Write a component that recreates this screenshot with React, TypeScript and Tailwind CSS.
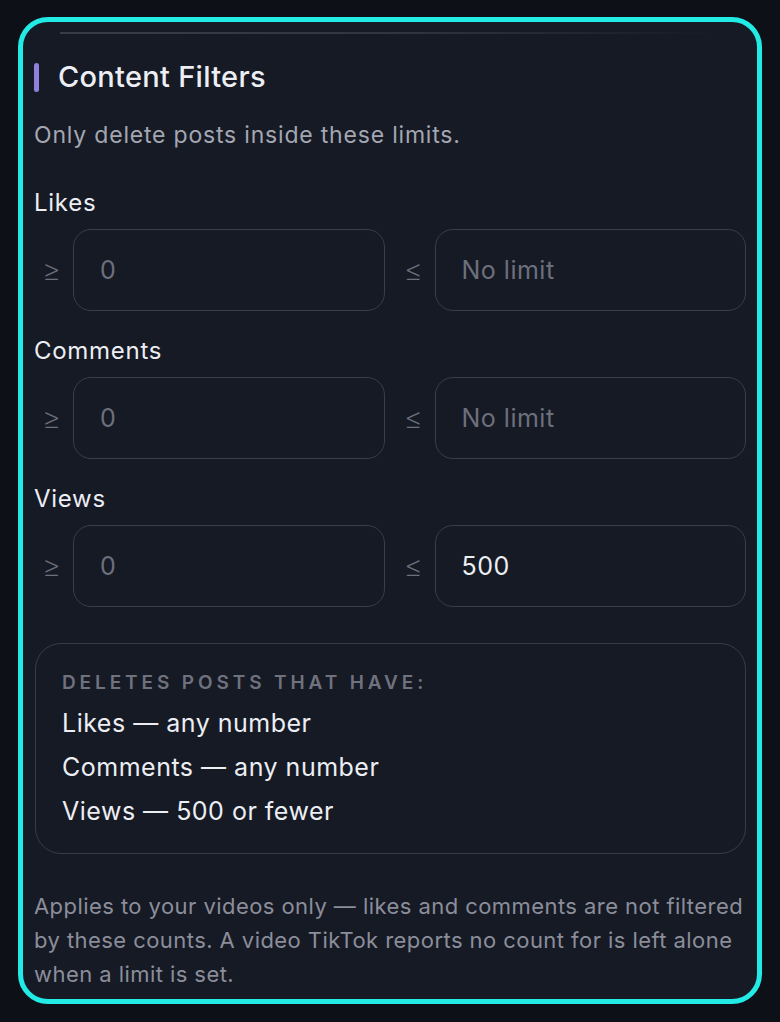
import React from "react";

function RangeRow({ min, max, maxFilled }: { min: string; max: string; maxFilled?: boolean }) {
  return (
    <div className="mt-[11px] grid grid-cols-[auto_1fr_auto_1fr] items-center gap-x-[19px] pl-2">
      <span className="w-3 text-center text-[30px] font-extralight leading-none text-[#6c707c]">≥</span>
      <div className="flex h-[82px] items-center rounded-[18px] border-[1.5px] border-[#3a3e4a] pl-[26px] pt-[2px] text-[25px] tracking-[0.02em] text-[#6c707c]">
        {min}
      </div>
      <span className="w-3 text-center text-[30px] font-extralight leading-none text-[#6c707c]">≤</span>
      <div
        className={
          maxFilled
            ? "flex h-[82px] items-center rounded-[18px] border-[1.5px] border-[#3a3e4a] pl-[26px] pt-[2px] text-[25px] tracking-[0.02em] text-[#eceef2]"
            : "flex h-[82px] items-center rounded-[18px] border-[1.5px] border-[#3a3e4a] pl-[26px] pt-[2px] text-[25px] tracking-[0.02em] text-[#6c707c]"
        }
      >
        {max}
      </div>
    </div>
  );
}

export default function App() {
  return (
    <div
      className="min-h-[1022px] w-full bg-[#0d1017] pt-[17px] pl-[18px] pr-[18px]"
      style={{ fontFamily: "Inter, 'Noto Sans', sans-serif" }}
    >
      <div className="relative flex h-[987px] flex-col rounded-[30px] border-[5px] border-[#22ebe5] bg-[#161a25] px-[11px] pt-[37px]">
        <div className="absolute left-[37px] right-[37px] top-[10px] h-[2px] bg-gradient-to-r from-white/15 via-white/12 to-transparent" />

        <div className="flex h-[36px] items-center gap-[19px]">
          <div className="h-[29px] w-[5px] rounded-full bg-[#8e80dc]" />
          <h2 className="text-[29px] font-medium leading-[36px] tracking-[0.01em] text-[#eceef3]">Content Filters</h2>
        </div>

        <p className="mt-[25px] text-[23px] leading-[30px] tracking-[0.035em] text-[#a4a7b2]">Only delete posts inside these limits.</p>

        <div className="mt-[38px] text-[24px] leading-[30px] tracking-[0.03em] text-[#eceef3]">Likes</div>
        <RangeRow min="0" max="No limit" />

        <div className="mt-[25px] text-[24px] leading-[30px] tracking-[0.03em] text-[#eceef3]">Comments</div>
        <RangeRow min="0" max="No limit" />

        <div className="mt-[25px] text-[24px] leading-[30px] tracking-[0.03em] text-[#eceef3]">Views</div>
        <RangeRow min="0" max="500" maxFilled />

        <div className="mt-[36px] ml-px rounded-[26px] border-[1.5px] border-[#393c47] pb-[20px] pl-[26px] pt-[25px]">
          <div className="text-[19px] font-semibold uppercase leading-[28px] tracking-[0.205em] text-[#6f727e]">
            Deletes posts that have:
          </div>
          <div className="mt-[4px] text-[25px] leading-[44px] tracking-[0.02em] text-[#eceef3]">Likes — any number</div>
          <div className="text-[25px] leading-[44px] tracking-[0.02em] text-[#eceef3]">Comments — any number</div>
          <div className="text-[25px] leading-[44px] tracking-[0.02em] text-[#eceef3]">Views — 500 or fewer</div>
        </div>

        <p className="mt-[35px] whitespace-nowrap text-[22px] leading-[34px] tracking-[0.02em] text-[#8b8e9a]">
          Applies to your videos only — likes and comments are not filtered
          <br />
          by these counts. A video TikTok reports no count for is left alone
          <br />
          when a limit is set.
        </p>
      </div>
    </div>
  );
}
